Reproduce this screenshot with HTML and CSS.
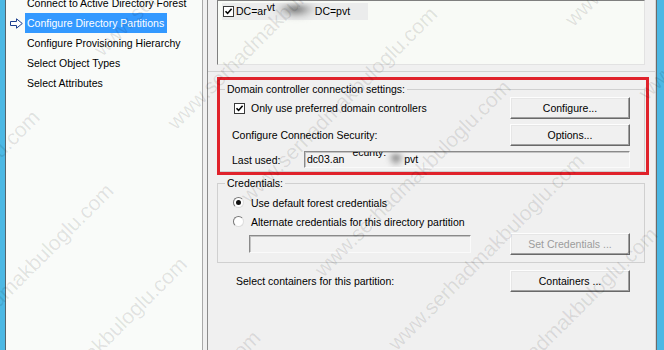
FILE: index.html
```html
<!DOCTYPE html>
<html lang="en">
<head>
<meta charset="utf-8">
<title>Configure Directory Partitions</title>
<link rel="stylesheet" href="styles.css">
</head>
<body>
<div class="window">
  <div class="frame-left"></div>
  <nav class="nav">
    <ul class="steps">
      <li class="step"><span class="mark"></span><span class="label">Connect to Active Directory Forest</span></li>
      <li class="step current"><span class="mark"><svg width="13" height="11" viewBox="0 0 13 11"><path d="M0.5 3.5H6.5V0.8L12.3 5.5L6.5 10.2V7.5H0.5Z" fill="#fff" stroke="#1d3f8e" stroke-width="1"/></svg></span><span class="label">Configure Directory Partitions</span></li>
      <li class="step"><span class="mark"></span><span class="label">Configure Provisioning Hierarchy</span></li>
      <li class="step"><span class="mark"></span><span class="label">Select Object Types</span></li>
      <li class="step"><span class="mark"></span><span class="label">Select Attributes</span></li>
    </ul>
  </nav>
  <div class="gap"></div>
  <main class="content">
    <div class="partlist">
      <div class="partitem">
        <span class="check"><svg width="9" height="9" viewBox="0 0 9 9"><path d="M1.5 4.2L3.6 6.4L7.6 1.8" fill="none" stroke="#000" stroke-width="1.6"/></svg></span>
        <span class="dn">DC=ar<span class="raised">vt</span><span class="smudge s1"></span>DC=pvt</span>
      </div>
    </div>
    <div class="sep"></div>

    <fieldset class="group dc">
      <legend>Domain controller connection settings:</legend>
      <div class="row r22">
        <span class="opt"><span class="check"><svg width="9" height="9" viewBox="0 0 9 9"><path d="M1.5 4.2L3.6 6.4L7.6 1.8" fill="none" stroke="#000" stroke-width="1.6"/></svg></span>Only use preferred domain controllers</span>
        <button class="btn" type="button">Configure...</button>
      </div>
      <div class="row r22">
        <span class="txt">Configure Connection Security:</span>
        <button class="btn" type="button">Options...</button>
      </div>
      <div class="row r17">
        <span class="txt">Last used:</span>
        <div class="field lastused">dc03.an<span class="ghost">ecurity:</span><span class="smudge s2"></span>pvt</div>
      </div>
    </fieldset>

    <fieldset class="group cred">
      <legend>Credentials:</legend>
      <div class="radio-row"><span class="radio"><span class="dot"></span></span>Use default forest credentials</div>
      <div class="radio-row"><span class="radio"></span>Alternate credentials for this directory partition</div>
      <div class="row r22 credrow">
        <div class="field disabled"></div>
        <button class="btn" type="button" disabled>Set Credentials ...</button>
      </div>
    </fieldset>

    <div class="row r22 containers">
      <span>Select containers for this partition:</span>
      <button class="btn" type="button">Containers ...</button>
    </div>
  </main>
  <div class="frame-right"></div>

  <div class="annot"></div>

  <div class="watermark" aria-hidden="true">
    <div class="wm-row"><span>www.serhadmakbuloglu.com</span><span>www.serhadmakbuloglu.com</span><span>www.serhadmakbuloglu.com</span><span>www.serhadmakbuloglu.com</span></div>
    <div class="wm-row"><span>www.serhadmakbuloglu.com</span><span>www.serhadmakbuloglu.com</span><span>www.serhadmakbuloglu.com</span><span>www.serhadmakbuloglu.com</span></div>
    <div class="wm-row"><span>www.serhadmakbuloglu.com</span><span>www.serhadmakbuloglu.com</span><span>www.serhadmakbuloglu.com</span><span>www.serhadmakbuloglu.com</span></div>
    <div class="wm-row"><span>www.serhadmakbuloglu.com</span><span>www.serhadmakbuloglu.com</span><span>www.serhadmakbuloglu.com</span><span>www.serhadmakbuloglu.com</span></div>
    <div class="wm-row"><span>www.serhadmakbuloglu.com</span><span>www.serhadmakbuloglu.com</span><span>www.serhadmakbuloglu.com</span><span>www.serhadmakbuloglu.com</span></div>
    <div class="wm-row"><span>www.serhadmakbuloglu.com</span><span>www.serhadmakbuloglu.com</span><span>www.serhadmakbuloglu.com</span><span>www.serhadmakbuloglu.com</span></div>
    <div class="wm-row"><span>www.serhadmakbuloglu.com</span><span>www.serhadmakbuloglu.com</span><span>www.serhadmakbuloglu.com</span><span>www.serhadmakbuloglu.com</span></div>
    <div class="wm-row"><span>www.serhadmakbuloglu.com</span><span>www.serhadmakbuloglu.com</span><span>www.serhadmakbuloglu.com</span><span>www.serhadmakbuloglu.com</span></div>
  </div>
</div>
</body>
</html>
```

FILE: styles.css
```css
* { box-sizing: border-box; }
html, body { margin: 0; padding: 0; }
body {
  width: 664px;
  height: 350px;
  overflow: hidden;
  background: #f0f0f0;
  font-family: "Liberation Sans", Arial, sans-serif;
  font-size: 10.5px;
  color: #000;
}
.window {
  position: relative;
  display: flex;
  height: 350px;
  overflow: hidden;
}
.frame-left {
  width: 6px;
  flex: none;
  background: #4cb8e4;
  border-right: 1px solid #56646c;
}
.frame-right {
  width: 8px;
  flex: none;
  background: #4cb8e4;
  border-left: 1px solid #6b6b6b;
}
.nav {
  width: 197px;
  flex: none;
  background: #f9fbf9;
  border-right: 1px solid #a9a9a9;
}
.steps {
  list-style: none;
  margin: -7px 0 0;
  padding: 0;
}
.step {
  display: flex;
  align-items: center;
  height: 20px;
}
.mark {
  width: 19px;
  height: 20px;
  flex: none;
  display: flex;
  align-items: center;
  padding-left: 4px;
}
.label {
  padding: 0 3px 0 2px;
  line-height: 20px;
  white-space: nowrap;
}
.current .label {
  background: #3399ff;
  color: #fff;
}
.gap { width: 4px; flex: none; }

.content {
  width: 449px;
  flex: none;
  border-left: 1px solid #8c8c8c;
  border-right: 1px solid #d6d6d6;
  padding: 0 10px 0 9px;
}

/* partition list */
.partlist {
  height: 65px;
  background: #f8faf6;
  border: 1px solid;
  border-color: #7f7f7f #e2e2e2 #e2e2e2 #7f7f7f;
  padding: 2px 0 0 4px;
}
.partitem {
  display: flex;
  align-items: center;
  width: 146px;
  height: 17px;
  padding-left: 1px;
  background: #ebecec;
  white-space: nowrap;
}
.partitem .check { margin-right: 2px; }
.dn { line-height: 17px; }
.raised {
  position: relative;
  top: -4px;
}
.smudge {
  display: inline-block;
  vertical-align: middle;
  filter: blur(2.5px);
  background: radial-gradient(ellipse at 50% 25%, rgba(70,70,70,0.75), rgba(180,180,180,0.35) 55%, rgba(230,230,230,0) 80%);
}
.s1 { width: 42px; height: 14px; margin: 0 -2px 0 0; }
.s2 { width: 16px; height: 13px; margin-left: 2px; }

.sep {
  height: 1px;
  background: #d2d2d2;
  margin: 6px -10px 0 -9px;
}

/* check & radio */
.check {
  width: 11px;
  height: 11px;
  flex: none;
  display: inline-flex;
  align-items: center;
  justify-content: center;
  border: 1px solid #3a3a3a;
  background: #fff;
}
.radio {
  width: 11px;
  height: 11px;
  flex: none;
  display: inline-flex;
  align-items: center;
  justify-content: center;
  border-radius: 50%;
  border: 1px solid;
  border-color: #777 #ddd #ddd #777;
  background: #fff;
  margin-right: 7px;
}
.dot {
  width: 5px;
  height: 5px;
  border-radius: 50%;
  background: #111;
}

/* group boxes */
.group {
  margin: 11px 0 0;
  min-width: 0;
  border: 1px solid #d0d0d0;
  padding: 2px 14px 3px 7px;
  display: flex;
  flex-direction: column;
  gap: 5px;
}
.group legend {
  padding: 0 2px;
  height: 12px;
  line-height: 12px;
  white-space: nowrap;
}
.cred {
  margin-top: 5px;
  padding: 4px 14px 7px 7px;
  gap: 0;
}
.row {
  display: flex;
  align-items: center;
  white-space: nowrap;
}
.r22 { height: 22px; }
.r17 { height: 17px; }
.txt { padding-left: 7px; }
.opt {
  display: flex;
  align-items: center;
  gap: 6px;
  padding-left: 9px;
}
.radio-row {
  display: flex;
  align-items: center;
  height: 19px;
  padding-left: 8px;
  white-space: nowrap;
}
.credrow { margin-top: 2px; }

.containers {
  margin-top: 7px;
  padding: 0 15px 0 19px;
}

/* buttons */
.btn {
  width: 120px;
  height: 22px;
  flex: none;
  margin-left: auto;
  padding: 0;
  font: inherit;
  color: #000;
  background: #f0f0f0;
  border: 1px solid;
  border-color: #fdfdfd #696969 #696969 #fdfdfd;
  box-shadow: inset -1px -1px 0 #a0a0a0, inset 1px 1px 0 #e6e6e6;
  border-radius: 0;
}
.btn:disabled {
  color: #9c9c9c;
}

/* text fields */
.field {
  height: 17px;
  border: 1px solid;
  border-color: #8a8a8a #fafafa #fafafa #8a8a8a;
  box-shadow: inset 1px 1px 0 #c4c4c4;
  background: #f2f2f2;
  padding: 0 2px;
  line-height: 15px;
  overflow: hidden;
  white-space: nowrap;
}
.lastused {
  width: 326px;
  margin-left: auto;
}
.ghost {
  position: relative;
  top: -7px;
  margin-left: 8px;
}
.field.disabled {
  width: 222px;
  height: 18px;
  margin-left: 24px;
}

/* annotation */
.annot {
  position: absolute;
  left: 217px;
  top: 77px;
  width: 432px;
  height: 98px;
  border: 3px solid #e0222b;
  pointer-events: none;
}

/* watermark */
.watermark {
  position: absolute;
  left: 0;
  top: 0;
  width: 1450px;
  transform-origin: 0 0;
  transform: rotate(-45deg) translate(-700px, -50px);
  pointer-events: none;
  font-size: 21px;
  color: rgba(0, 0, 0, 0.1);
  white-space: nowrap;
}
.wm-row {
  display: flex;
  height: 104px;
  align-items: center;
  padding-left: 24px;
}
.wm-row span {
  flex: none;
  width: 354px;
  line-height: 104px;
}
```
